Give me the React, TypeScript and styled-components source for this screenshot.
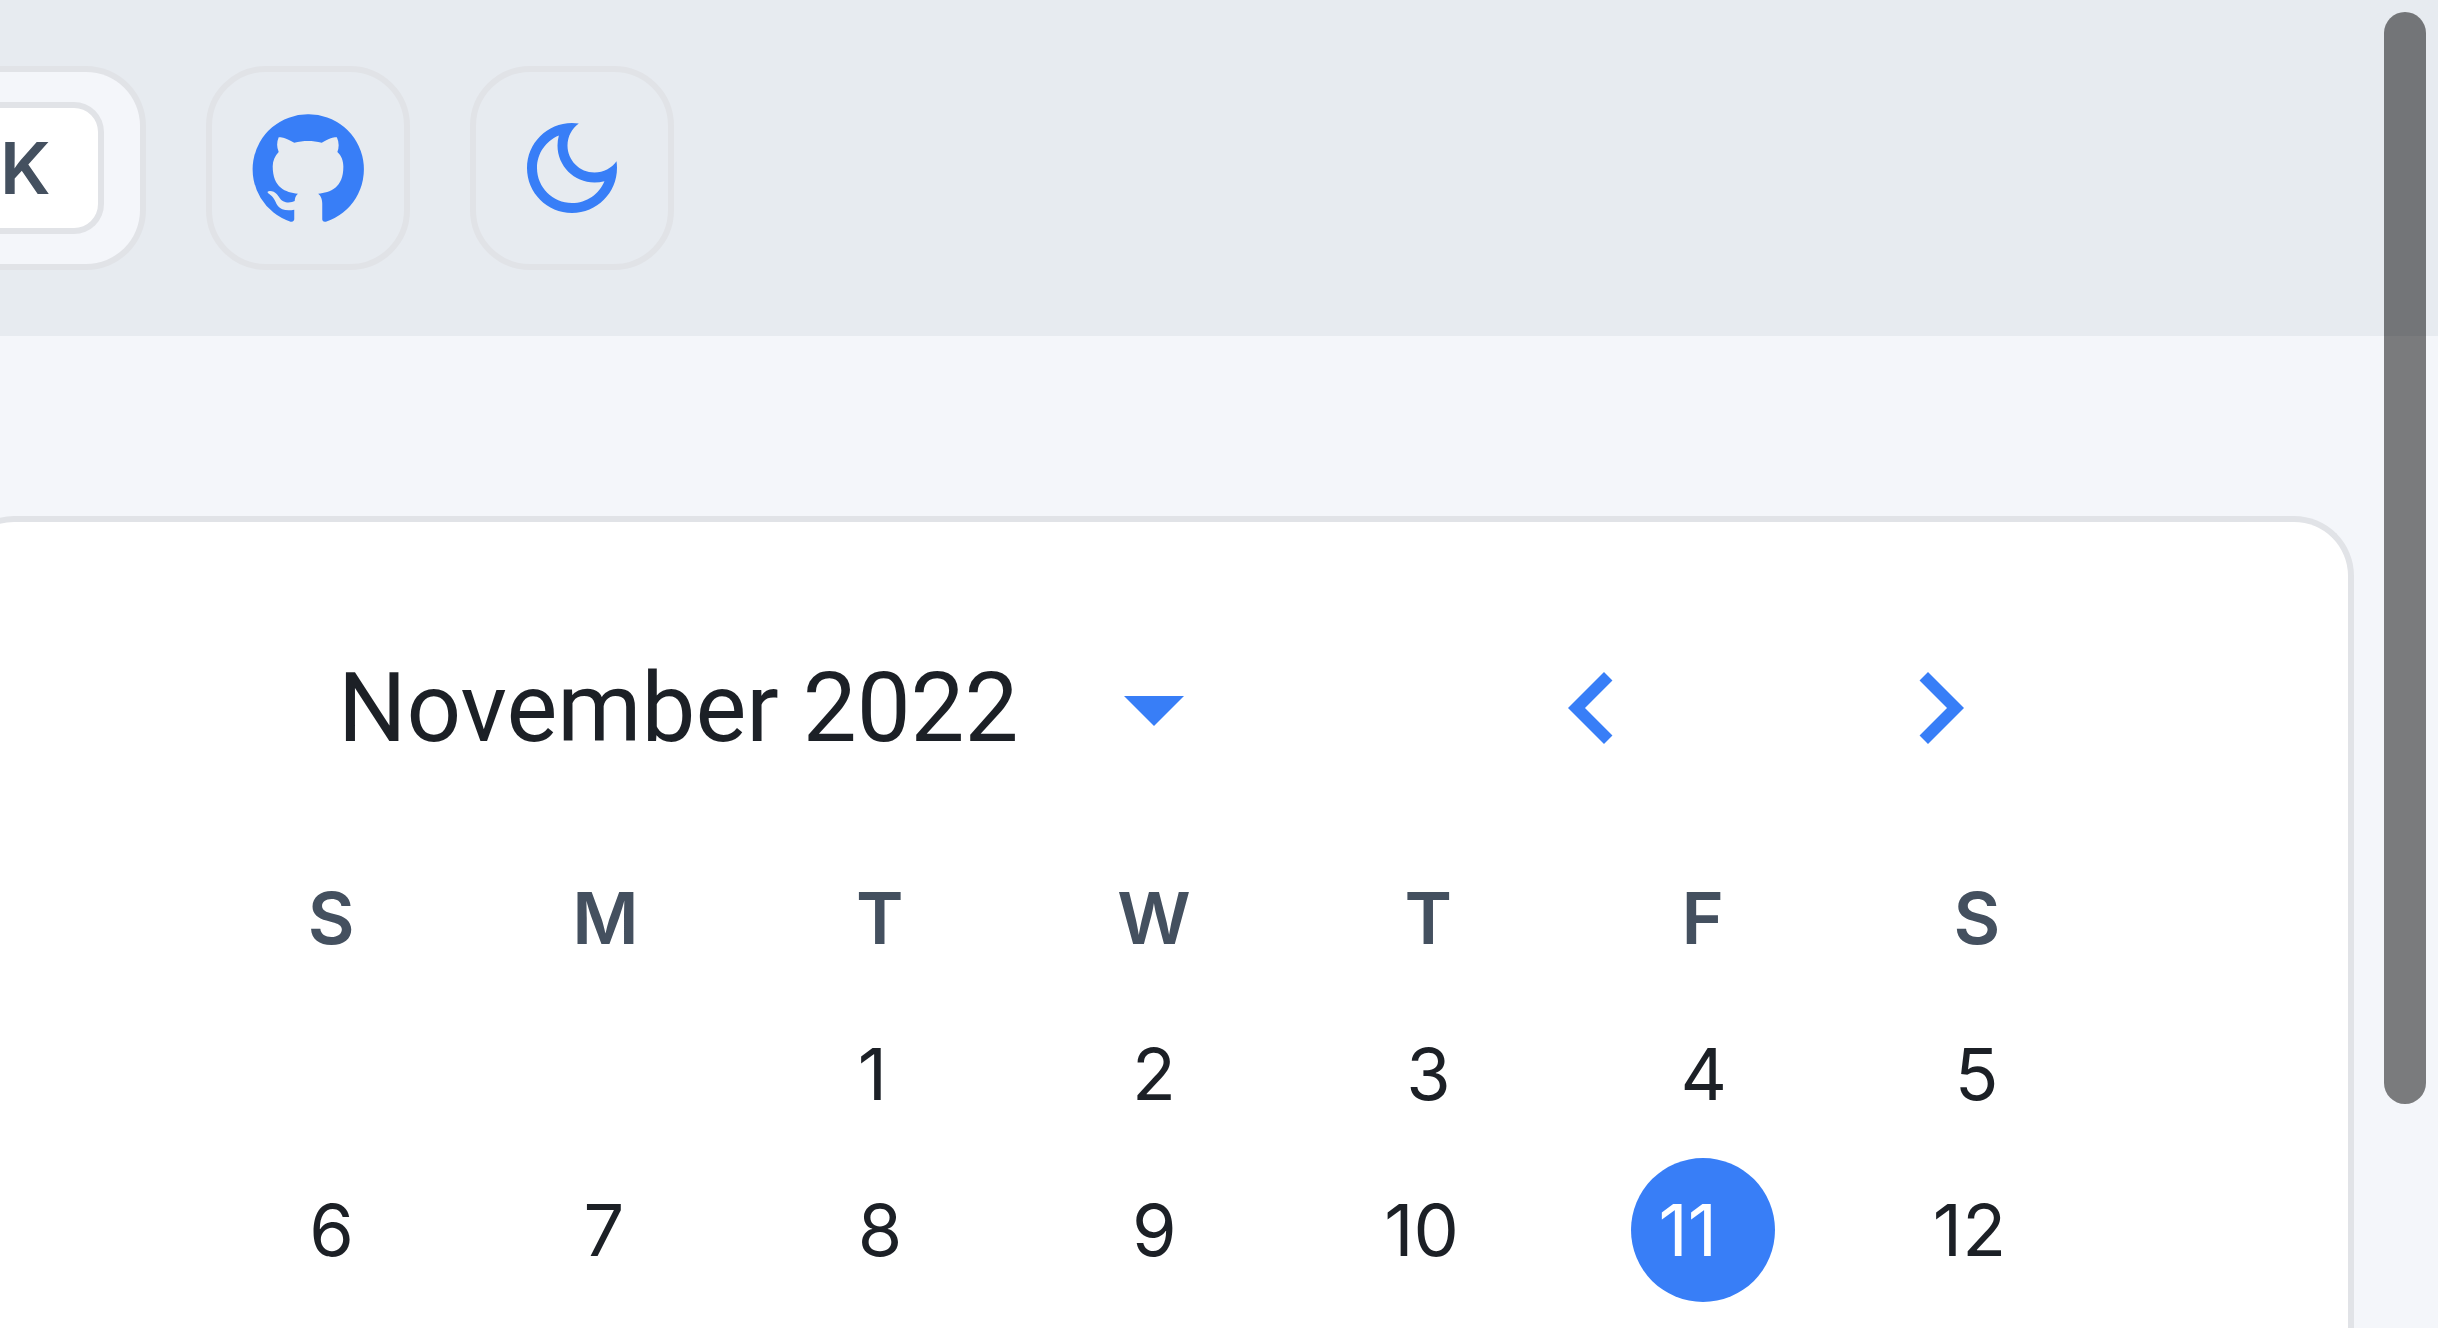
import React from 'react';
import styled, { createGlobalStyle } from 'styled-components';

const color = {
  bar: '#e7ebf0',
  page: '#f4f6fa',
  line: '#e1e3e7',
  blue: '#387ef7',
  text: '#1c2026',
  muted: '#44505f',
  paper: '#ffffff',
};

const GlobalStyle = createGlobalStyle`
  *, *::before, *::after { box-sizing: border-box; }
  body {
    margin: 0;
    background: ${color.page};
    color: ${color.text};
    font-family: Inter, "Liberation Sans", sans-serif;
    font-size: 72px;
    line-height: 96px;
  }
`;

const Page = styled.div`
  position: relative;
  display: flex;
  flex-direction: column;
  height: 100vh;
  overflow: hidden;
`;

const TopBar = styled.header`
  display: flex;
  align-items: center;
  gap: 60px;
  padding: 66px 0;
  background: ${color.bar};
`;

const SearchButton = styled.button`
  display: flex;
  align-items: center;
  justify-content: flex-end;
  width: 146px;
  height: 204px;
  padding: 0 36px 0 0;
  border: 6px solid ${color.line};
  border-left: 0;
  border-radius: 0 60px 60px 0;
  background: ${color.page};
  cursor: pointer;
`;

const Shortcut = styled.kbd`
  display: flex;
  align-items: center;
  justify-content: flex-start;
  width: 104px;
  height: 132px;
  border: 6px solid ${color.line};
  border-left: 0;
  border-radius: 0 30px 30px 0;
  background: ${color.paper};
  color: ${color.muted};
  font: 600 72px/96px Inter, "Liberation Sans", sans-serif;
`;

const BarAction = styled.button`
  display: flex;
  align-items: center;
  justify-content: center;
  width: 204px;
  height: 204px;
  padding: 0;
  border: 6px solid ${color.line};
  border-radius: 60px;
  background: transparent;
  color: ${color.blue};
  cursor: pointer;
`;

const Icon = styled.svg<{ $size: number }>`
  display: block;
  flex: none;
  width: ${(p) => p.$size}px;
  height: ${(p) => p.$size}px;
  fill: currentColor;
`;

const Card = styled.main`
  flex: 1;
  margin: 180px 84px 0 -46px;
  padding-top: 84px;
  border: 6px solid ${color.line};
  border-bottom: 0;
  border-radius: 60px 60px 0 0;
  background: ${color.paper};
`;

const Calendar = styled.section`
  width: 1920px;
  max-width: 100%;
  margin: 0 auto;
`;

const CalendarHeader = styled.div`
  display: flex;
  align-items: center;
  margin-bottom: 30px;
  padding: 0 72px 0 144px;
`;

const MonthTitle = styled.h2`
  min-width: 714px;
  margin: 0;
  font-family: Roboto, "Liberation Sans", sans-serif;
  font-size: 96px;
  font-weight: 400;
  line-height: 144px;
`;

const IconButton = styled.button`
  padding: 30px;
  border: 0;
  border-radius: 50%;
  background: transparent;
  color: ${color.blue};
  cursor: pointer;
`;

const MonthNav = styled.nav`
  display: flex;
  gap: 144px;
  margin-left: auto;
`;

const Days = styled.table`
  width: 100%;
  border-spacing: 0;
  table-layout: fixed;
`;

const Weekday = styled.th`
  height: 156px;
  padding: 0;
  color: ${color.muted};
  font-weight: 600;
  text-align: center;
`;

const DayCell = styled.td`
  height: 156px;
  padding: 0;
`;

const DayButton = styled.button<{ $selected: boolean }>`
  display: flex;
  align-items: center;
  justify-content: center;
  width: 144px;
  height: 144px;
  margin: 0 auto;
  padding: 0;
  border: 0;
  border-radius: 50%;
  background: ${(p) => (p.$selected ? color.blue : 'transparent')};
  color: ${(p) => (p.$selected ? color.paper : color.text)};
  font: inherit;
  cursor: pointer;
`;

const DayNumber = styled.span<{ $digits: number }>`
  width: ${(p) => p.$digits * 44}px;
  text-align: left;
  white-space: nowrap;
`;

const ScrollThumb = styled.div`
  position: absolute;
  top: 12px;
  right: 12px;
  width: 42px;
  height: calc(100vh - 236px);
  border-radius: 21px;
  background: rgba(0, 0, 0, 0.5);
`;

const paths = {
  github:
    'M12 1.27a11 11 0 00-3.48 21.46c.55.09.73-.28.73-.55v-1.84c-3.03.64-3.67-1.46-3.67-1.46-.55-1.29-1.28-1.65-1.28-1.65-.92-.65.1-.65.1-.65 1.1 0 1.73 1.1 1.73 1.1.92 1.65 2.57 1.2 3.21.92a2 2 0 01.64-1.47c-2.47-.27-5.04-1.19-5.04-5.5 0-1.1.46-2.1 1.2-2.84a3.76 3.76 0 010-2.93s.91-.28 3.11 1.1c1.8-.49 3.7-.49 5.5 0 2.1-1.38 3.02-1.1 3.02-1.1a3.76 3.76 0 01.1 2.93c.83.74 1.2 1.74 1.2 2.94 0 4.21-2.57 5.13-5.04 5.4.45.37.82.92.82 2.02v3.03c0 .27.1.64.73.55A11 11 0 0012 1.27',
  moon:
    'M9.37 5.51c-.18.64-.27 1.31-.27 1.99 0 4.08 3.32 7.4 7.4 7.4.68 0 1.35-.09 1.99-.27C17.45 17.19 14.93 19 12 19c-3.86 0-7-3.14-7-7 0-2.93 1.81-5.45 4.37-6.49zM12 3c-4.97 0-9 4.03-9 9s4.03 9 9 9 9-4.03 9-9c0-.46-.04-.92-.1-1.36-.98 1.37-2.58 2.26-4.4 2.26-2.98 0-5.4-2.42-5.4-5.4 0-1.81.89-3.42 2.26-4.4-.44-.06-.9-.1-1.36-.1z',
  dropDown: 'M7 10l5 5 5-5z',
  left: 'M15.41 16.59L10.83 12l4.58-4.59L14 6l-6 6 6 6 1.41-1.41z',
  right: 'M8.59 16.59L13.17 12 8.59 7.41 10 6l6 6-6 6-1.41-1.41z',
};

function Glyph({ name, size }: { name: keyof typeof paths; size: number }) {
  return (
    <Icon $size={size} viewBox="0 0 24 24" aria-hidden="true">
      <path d={paths[name]} />
    </Icon>
  );
}

const weekdays = [
  { id: 'sun', letter: 'S' },
  { id: 'mon', letter: 'M' },
  { id: 'tue', letter: 'T' },
  { id: 'wed', letter: 'W' },
  { id: 'thu', letter: 'T' },
  { id: 'fri', letter: 'F' },
  { id: 'sat', letter: 'S' },
];

const weeks: (number | null)[][] = [
  [null, null, 1, 2, 3, 4, 5],
  [6, 7, 8, 9, 10, 11, 12],
];

export default function App() {
  const [selected, setSelected] = React.useState(11);

  return (
    <>
      <GlobalStyle />
      <Page>
        <TopBar>
          <SearchButton type="button" aria-label="Search">
            <Shortcut>K</Shortcut>
          </SearchButton>
          <BarAction as="a" href="#github" aria-label="GitHub repository">
            <Glyph name="github" size={120} />
          </BarAction>
          <BarAction type="button" aria-label="Toggle dark mode">
            <Glyph name="moon" size={120} />
          </BarAction>
        </TopBar>

        <Card>
          <Calendar>
            <CalendarHeader>
              <MonthTitle>November 2022</MonthTitle>
              <IconButton type="button" aria-label="Switch to year view">
                <Glyph name="dropDown" size={144} />
              </IconButton>
              <MonthNav>
                <IconButton type="button" aria-label="Previous month">
                  <Glyph name="left" size={144} />
                </IconButton>
                <IconButton type="button" aria-label="Next month">
                  <Glyph name="right" size={144} />
                </IconButton>
              </MonthNav>
            </CalendarHeader>

            <Days>
              <thead>
                <tr>
                  {weekdays.map((day) => (
                    <Weekday key={day.id} scope="col">
                      {day.letter}
                    </Weekday>
                  ))}
                </tr>
              </thead>
              <tbody>
                {weeks.map((week, row) => (
                  <tr key={row}>
                    {week.map((day, column) => (
                      <DayCell key={column}>
                        {day !== null && (
                          <DayButton
                            type="button"
                            $selected={day === selected}
                            aria-pressed={day === selected}
                            onClick={() => setSelected(day)}
                          >
                            <DayNumber $digits={String(day).length}>{day}</DayNumber>
                          </DayButton>
                        )}
                      </DayCell>
                    ))}
                  </tr>
                ))}
              </tbody>
            </Days>
          </Calendar>
        </Card>
        <ScrollThumb />
      </Page>
    </>
  );
}
